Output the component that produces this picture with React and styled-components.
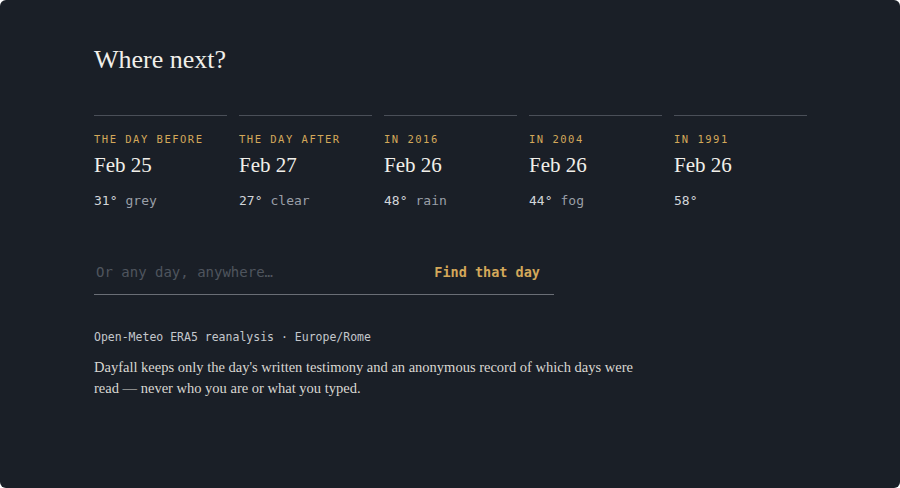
import React from "react";
import styled, { createGlobalStyle } from "styled-components";

const GlobalStyle = createGlobalStyle`
  html, body {
    margin: 0;
    padding: 0;
    background: #ffffff;
  }
  * {
    box-sizing: border-box;
  }
`;

const days = [
  { label: "The day before", date: "Feb 25", temp: "31°", sky: "grey" },
  { label: "The day after", date: "Feb 27", temp: "27°", sky: "clear" },
  { label: "In 2016", date: "Feb 26", temp: "48°", sky: "rain" },
  { label: "In 2004", date: "Feb 26", temp: "44°", sky: "fog" },
  { label: "In 1991", date: "Feb 26", temp: "58°", sky: "" },
];

function App() {
  return (
    <>
      <GlobalStyle />
      <Page>
        <Title>Where next?</Title>
        <DayGrid>
          {days.map((d) => (
            <DayCard key={d.label}>
              <DayLabel>{d.label}</DayLabel>
              <DayDate>{d.date}</DayDate>
              <DayWeather>
                <Temp>{d.temp}</Temp>
                {d.sky && <Sky>{d.sky}</Sky>}
              </DayWeather>
            </DayCard>
          ))}
        </DayGrid>
        <SearchRow onSubmit={(e) => e.preventDefault()}>
          <SearchInput placeholder="Or any day, anywhere…" />
          <SearchButton type="submit">Find that day</SearchButton>
        </SearchRow>
        <Source>Open-Meteo ERA5 reanalysis · Europe/Rome</Source>
        <Privacy>
          Dayfall keeps only the day's written testimony and an anonymous record
          of which days were read — never who you are or what you typed.
        </Privacy>
      </Page>
    </>
  );
}

const Page = styled.div`
  width: 900px;
  height: 488px;
  background: #1a1f27;
  border-radius: 6px;
  padding: 44px 94px 0;
  overflow: hidden;
  color: #e8e6e1;
`;

const Title = styled.h1`
  margin: 0;
  font-family: "Liberation Serif", "DejaVu Serif", serif;
  font-weight: 400;
  font-size: 26px;
  line-height: 32px;
  color: #f1efea;
`;

const DayGrid = styled.div`
  display: grid;
  grid-template-columns: repeat(5, 133px);
  column-gap: 12px;
  margin-top: 39px;
`;

const DayCard = styled.div`
  border-top: 1px solid #4a4f58;
  padding-top: 16px;
`;

const DayLabel = styled.div`
  font-family: "DejaVu Sans Mono", "Liberation Mono", monospace;
  font-size: 10.5px;
  line-height: 14px;
  letter-spacing: 1.5px;
  text-transform: uppercase;
  color: #d4a85a;
`;

const DayDate = styled.div`
  margin-top: 5px;
  font-family: "Liberation Serif", "DejaVu Serif", serif;
  font-size: 21px;
  line-height: 28px;
  color: #f1efea;
`;

const DayWeather = styled.div`
  margin-top: 13px;
  font-family: "DejaVu Sans Mono", "Liberation Mono", monospace;
  font-size: 13px;
  line-height: 18px;
  display: flex;
  gap: 8px;
`;

const Temp = styled.span`
  color: #d2d5da;
`;

const Sky = styled.span`
  color: #9a9fa7;
`;

const SearchRow = styled.form`
  width: 460px;
  margin-top: 52px;
  display: flex;
  align-items: center;
  justify-content: space-between;
  border-bottom: 1px solid #6a6e76;
  padding: 0 14px 12px 2px;
`;

const SearchInput = styled.input`
  flex: 1;
  background: transparent;
  border: none;
  outline: none;
  padding: 0;
  font-family: "DejaVu Sans Mono", "Liberation Mono", monospace;
  font-size: 14px;
  line-height: 20px;
  color: #e8e6e1;
  &::placeholder {
    color: #4f555e;
  }
`;

const SearchButton = styled.button`
  background: none;
  border: none;
  padding: 0;
  cursor: pointer;
  font-family: "DejaVu Sans Mono", "Liberation Mono", monospace;
  font-weight: 700;
  font-size: 13.5px;
  line-height: 20px;
  color: #d4a85a;
`;

const Source = styled.div`
  margin-top: 34px;
  font-family: "DejaVu Sans Mono", "Liberation Mono", monospace;
  font-size: 11.5px;
  line-height: 16px;
  color: #c4c7cc;
`;

const Privacy = styled.p`
  margin: 12px 0 0;
  width: 560px;
  font-family: "Liberation Serif", "DejaVu Serif", serif;
  font-size: 14.5px;
  line-height: 21px;
  color: #d9d7d2;
`;

export default App;
